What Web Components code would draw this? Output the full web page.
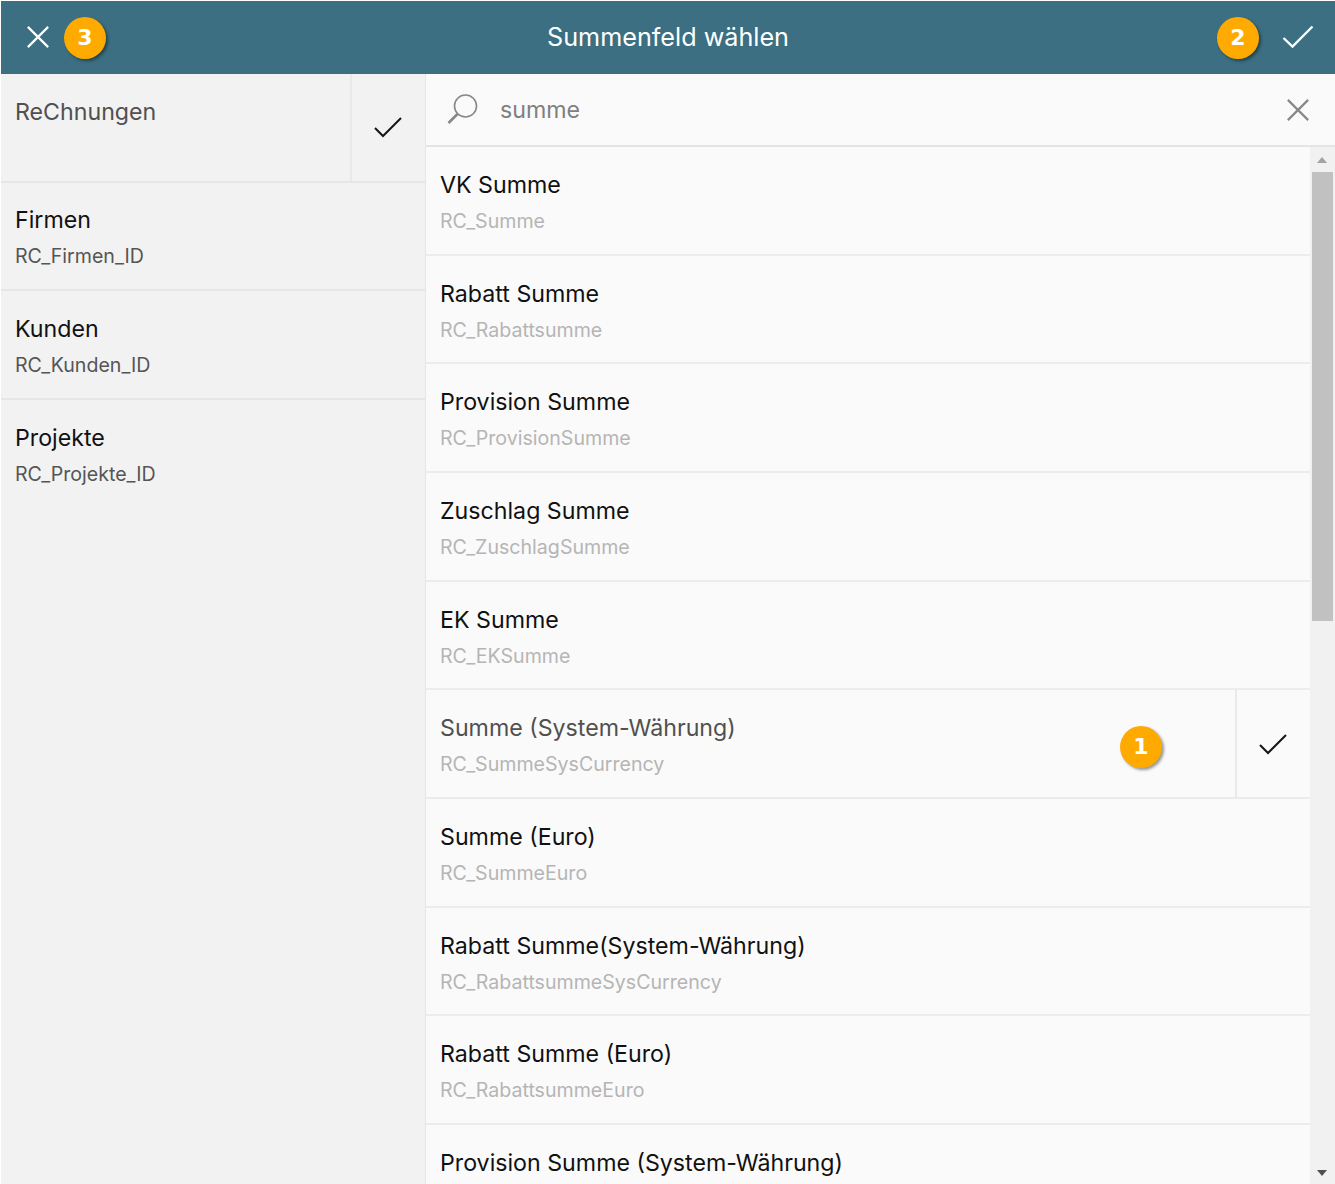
<!DOCTYPE html>
<html lang="de">
<head>
<meta charset="utf-8">
<title>Summenfeld wählen</title>
<style>
  html, body { margin: 0; height: 100%; overflow: hidden; background: #fff; }
  body { padding: 1px 0 0 1px; box-sizing: border-box; font-family: Inter, "Liberation Sans", sans-serif; }
  field-dialog { height: 1183px; }
</style>
</head>
<body>
<field-dialog>
  <dialog-header slot="header" title-text="Summenfeld wählen"></dialog-header>
  <table-list slot="left">
    <list-row label="ReChnungen" selected tone="left"></list-row>
    <list-row label="Firmen" sub="RC_Firmen_ID" tone="left"></list-row>
    <list-row label="Kunden" sub="RC_Kunden_ID" tone="left"></list-row>
    <list-row label="Projekte" sub="RC_Projekte_ID" tone="left"></list-row>
  </table-list>
  <search-bar slot="search" value="summe"></search-bar>
  <field-list slot="right">
    <list-row label="VK Summe" sub="RC_Summe"></list-row>
    <list-row label="Rabatt Summe" sub="RC_Rabattsumme"></list-row>
    <list-row label="Provision Summe" sub="RC_ProvisionSumme"></list-row>
    <list-row label="Zuschlag Summe" sub="RC_ZuschlagSumme"></list-row>
    <list-row label="EK Summe" sub="RC_EKSumme"></list-row>
    <list-row label="Summe (System-Währung)" sub="RC_SummeSysCurrency" selected><step-badge n="1" style="position:absolute;left:694px;top:36px"></step-badge></list-row>
    <list-row label="Summe (Euro)" sub="RC_SummeEuro"></list-row>
    <list-row label="Rabatt Summe(System-Währung)" sub="RC_RabattsummeSysCurrency"></list-row>
    <list-row label="Rabatt Summe (Euro)" sub="RC_RabattsummeEuro"></list-row>
    <list-row label="Provision Summe (System-Währung)" sub="RC_ProvisionSummeSysCurrency"></list-row>
  </field-list>
</field-dialog>

<script>
const ICON_X = '<path d="M2 2 L24 24 M24 2 L2 24" fill="none" stroke="currentColor" stroke-width="2.4"/>';

class FieldDialog extends HTMLElement {
  connectedCallback() {
    this.attachShadow({ mode: 'open' });
    this.shadowRoot.innerHTML = `
      <style>
        :host { display: grid; grid-template-columns: 425px 1fr; grid-template-rows: 73px 1fr; min-height: 0; }
        .top { grid-column: 1 / 3; }
        .left { background: #f2f2f2; border-right: 1px solid #e6e6e6; overflow: hidden; }
        .right { display: flex; flex-direction: column; background: #fafafa; overflow: hidden; min-height: 0; }
      </style>
      <div class="top"><slot name="header"></slot></div>
      <div class="left"><slot name="left"></slot></div>
      <div class="right"><slot name="search"></slot><slot name="right"></slot></div>
    `;
  }
}

class DialogHeader extends HTMLElement {
  connectedCallback() {
    this.attachShadow({ mode: 'open' });
    this.shadowRoot.innerHTML = `
      <style>
        :host { display: block; height: 73px; }
        .bar { height: 100%; background: #3b6f81; color: #fff; display: grid; grid-template-columns: 1fr auto 1fr; align-items: center; padding: 0 21px 0 25px; box-sizing: border-box; }
        h1 { margin: 1px 4px 0 0; font: 400 25.2px/1 Inter, sans-serif; }
        svg { display: block; margin-bottom: 2px; }
        .left, .right { display: flex; align-items: center; }
        .left { gap: 14px; }
        .right { gap: 23px; justify-content: flex-end; }
      </style>
      <div class="bar">
        <div class="left">
          <svg width="24" height="24" viewBox="0 0 26 26">${ICON_X}</svg>
          <step-badge n="3"></step-badge>
        </div>
        <h1>${this.getAttribute('title-text')}</h1>
        <div class="right">
          <step-badge n="2"></step-badge>
          <svg width="32" height="24" viewBox="0 0 32 24"><path d="M1.5 13 L10.5 21.5 L30.5 1.5" fill="none" stroke="currentColor" stroke-width="2.4"/></svg>
        </div>
      </div>
    `;
  }
}

class StepBadge extends HTMLElement {
  connectedCallback() {
    this.attachShadow({ mode: 'open' });
    this.shadowRoot.innerHTML = `
      <style>
        :host { display: block; width: 42px; height: 42px; }
        div { width: 100%; height: 100%; border-radius: 50%; background: #ffaa00; color: #fff; display: flex; align-items: center; justify-content: center; font: 700 22px/1 "DejaVu Sans", sans-serif; box-shadow: 2px 2px 3px rgba(0,0,0,.4); }
      </style>
      <div>${this.getAttribute('n')}</div>
    `;
  }
}

class TableList extends HTMLElement {
  connectedCallback() {
    this.attachShadow({ mode: 'open' });
    this.shadowRoot.innerHTML = `
      <style>:host { display: block; }</style>
      <slot></slot>
    `;
  }
}

class SearchBar extends HTMLElement {
  connectedCallback() {
    this.attachShadow({ mode: 'open' });
    this.shadowRoot.innerHTML = `
      <style>
        :host { display: block; flex: none; }
        .bar { height: 73px; box-sizing: border-box; border-bottom: 2px solid #e4e4e4; display: flex; align-items: center; padding: 0 25px 0 21px; color: #888; }
        span { flex: 1; margin: 3px 0 0 20px; font: 400 23.2px/1 Inter, sans-serif; color: #808080; }
        svg { display: block; }
      </style>
      <div class="bar">
        <svg width="33" height="31" viewBox="0 0 33 31"><circle cx="18.5" cy="12" r="11" fill="none" stroke="currentColor" stroke-width="1.6"/><path d="M10.5 20 L1.5 29" fill="none" stroke="currentColor" stroke-width="2.6"/></svg>
        <span>${this.getAttribute('value')}</span>
        <svg width="24" height="24" viewBox="0 0 26 26">${ICON_X}</svg>
      </div>
    `;
  }
}

class FieldList extends HTMLElement {
  connectedCallback() {
    this.attachShadow({ mode: 'open' });
    this.shadowRoot.innerHTML = `
      <style>
        :host { display: flex; flex: 1; min-height: 0; }
        .rows { flex: 1; min-width: 0; overflow: hidden; }
        .track { flex: none; width: 25px; box-sizing: border-box; background: #f1f1f1; padding: 0 2px; display: flex; flex-direction: column; position: relative; }
        .up, .down { position: absolute; left: 7px; width: 0; height: 0; border-left: 5.5px solid transparent; border-right: 5.5px solid transparent; }
        .up { top: 10px; border-bottom: 6px solid #a3a3a3; }
        .down { bottom: 8px; border-top: 6px solid #505050; }
        .thumb { margin-top: 25px; height: 449px; background: #c1c1c1; }
      </style>
      <div class="rows"><slot></slot></div>
      <div class="track"><i class="up"></i><div class="thumb"></div><i class="down"></i></div>
    `;
  }
}

class ListRow extends HTMLElement {
  connectedCallback() {
    const selected = this.hasAttribute('selected');
    const left = this.getAttribute('tone') === 'left';
    const sub = this.getAttribute('sub');
    this.attachShadow({ mode: 'open' });
    this.shadowRoot.innerHTML = `
      <style>
        :host { display: block; position: relative; height: 108.67px; box-sizing: border-box; border-bottom: 2px solid ${left ? '#e6e6e6' : '#ececec'}; }
        :host(:last-child) { border-bottom: 0; }
        .row { display: flex; height: 100%; }
        .text { flex: 1; min-width: 0; padding: ${left ? '22.6px' : '23px'} 14px 0; }
        .label { font: 400 23.2px/30px Inter, sans-serif; color: ${selected ? '#505050' : '#111'}; white-space: nowrap; }
        .sub { margin-top: 9px; font: 400 19.6px/24px Inter, sans-serif; color: ${left ? '#555' : '#b5b5b5'}; white-space: nowrap; }
        .tick { flex: none; width: 75px; border-left: 2px solid #e9e9e9; display: flex; align-items: center; justify-content: center; box-sizing: border-box; padding: ${left ? '0' : '2px'} 2px 0 0; }
        svg { display: block; }
      </style>
      <div class="row">
        <div class="text">
          <div class="label">${this.getAttribute('label')}</div>
          ${sub ? `<div class="sub">${sub}</div>` : ''}
        </div>
        ${selected ? `<div class="tick"><svg width="28" height="21" viewBox="0 0 28 21"><path d="M1 11 L9 19 L27 1" fill="none" stroke="#151515" stroke-width="2"/></svg></div>` : ''}
      </div>
      <slot></slot>
    `;
  }
}

customElements.define('field-dialog', FieldDialog);
customElements.define('dialog-header', DialogHeader);
customElements.define('step-badge', StepBadge);
customElements.define('table-list', TableList);
customElements.define('search-bar', SearchBar);
customElements.define('field-list', FieldList);
customElements.define('list-row', ListRow);
</script>
</body>
</html>
